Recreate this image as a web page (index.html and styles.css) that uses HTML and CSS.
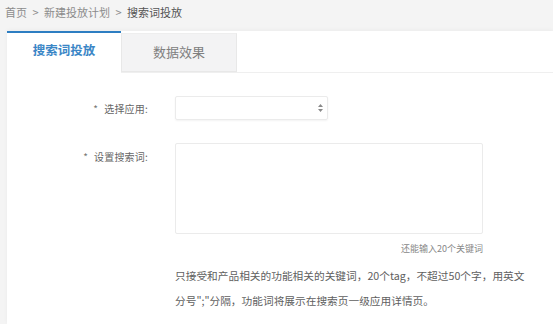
FILE: index.html
```html
<!DOCTYPE html>
<html lang="zh-CN">
<head>
    <meta charset="UTF-8">
    <meta name="viewport" content="width=device-width, initial-scale=1.0">
    <title>搜索词投放</title>
    <link rel="stylesheet" href="styles.css">
</head>
<body>
    <div class="breadcrumb">
        <a href="#">首页</a>
        <span class="sep">&gt;</span>
        <a href="#">新建投放计划</a>
        <span class="sep">&gt;</span>
        <span class="current">搜索词投放</span>
    </div>

    <div class="panel">
        <div class="tabs">
            <div class="tab active">搜索词投放</div>
            <div class="tab">数据效果</div>
        </div>

        <form class="form">
            <div class="form-row">
                <label class="form-label"><i>*</i>选择应用:</label>
                <div class="form-control">
                    <div class="select">
                        <span class="select-arrow">
                            <svg width="5" height="8" viewBox="0 0 5 8"><path d="M2.5 0 L5 3 H0 Z M2.5 8 L5 5 H0 Z" fill="#8a8a8a"/></svg>
                        </span>
                    </div>
                </div>
            </div>

            <div class="form-row top">
                <label class="form-label"><i>*</i>设置搜索词:</label>
                <div class="form-control">
                    <textarea class="textarea"></textarea>
                    <p class="hint">还能输入20个关键词</p>
                    <p class="desc">只接受和产品相关的功能相关的关键词，20个tag，不超过50个字，用英文分号";"分隔，功能词将展示在搜索页一级应用详情页。</p>
                </div>
            </div>
        </form>
    </div>
</body>
</html>
```

FILE: styles.css
```css
* {
    margin: 0;
    padding: 0;
    box-sizing: border-box;
}

body {
    font-family: "Noto Sans CJK SC", "Noto Sans", sans-serif;
    background: #f4f4f4;
    color: #555;
    overflow: hidden;
}

.breadcrumb {
    height: 31px;
    padding: 5px 0 0 5px;
    font-size: 11px;
    line-height: 15px;
    color: #8c8c8c;
}

.breadcrumb a {
    color: #8c8c8c;
    text-decoration: none;
}

.breadcrumb .sep {
    margin: 0 3px;
}

.breadcrumb .current {
    color: #555;
}

.panel {
    min-height: calc(100vh - 31px);
    margin-left: 7px;
    background: #fff;
    box-shadow: 0 -1px 4px rgba(0, 0, 0, 0.04);
}

.tabs {
    display: flex;
    height: 42px;
    border-bottom: 1px solid #efefef;
}

.tab {
    width: 116px;
    margin-top: 2px;
    background: #f3f3f4;
    border: 1px solid #e8e8e8;
    border-top-color: #eeeeee;
    text-align: center;
    font-size: 13px;
    line-height: 36px;
    color: #808080;
}

.tab.active {
    width: 114px;
    margin-top: 0;
    height: 42px;
    background: #fff;
    border: none;
    border-top: 2px solid #2d7ec2;
    color: #3a86c6;
    font-weight: bold;
    font-size: 12.5px;
    line-height: 34px;
}

.form {
    padding-top: 23px;
}

.form-row {
    display: flex;
    align-items: center;
    margin-bottom: 22px;
}

.form-row.top {
    align-items: flex-start;
}

.form-label {
    width: 141px;
    text-align: right;
    font-size: 10px;
    color: #666;
    letter-spacing: 0.2px;
}

.form-row.top .form-label {
    padding-top: 7px;
}

.form-label i {
    font-style: normal;
    color: #777;
    margin-right: 6px;
}

.form-control {
    margin-left: 27px;
}

.select {
    width: 153px;
    height: 24px;
    border: 1px solid #ebebeb;
    border-radius: 2px;
    box-shadow: 0 1px 2px rgba(0, 0, 0, 0.05);
    display: flex;
    align-items: center;
    justify-content: flex-end;
    padding-right: 4px;
}

.select-arrow {
    display: flex;
}

.textarea {
    display: block;
    width: 308px;
    height: 91px;
    margin-top: 1px;
    border: 1px solid #ebebeb;
    border-radius: 2px;
    resize: none;
    outline: none;
}

.hint {
    width: 308px;
    text-align: right;
    margin-top: 8px;
    font-size: 9px;
    line-height: 14px;
    color: #888;
}

.desc {
    width: 360px;
    margin-top: 7px;
    font-size: 10.7px;
    line-height: 25px;
    color: #606060;
}
```
